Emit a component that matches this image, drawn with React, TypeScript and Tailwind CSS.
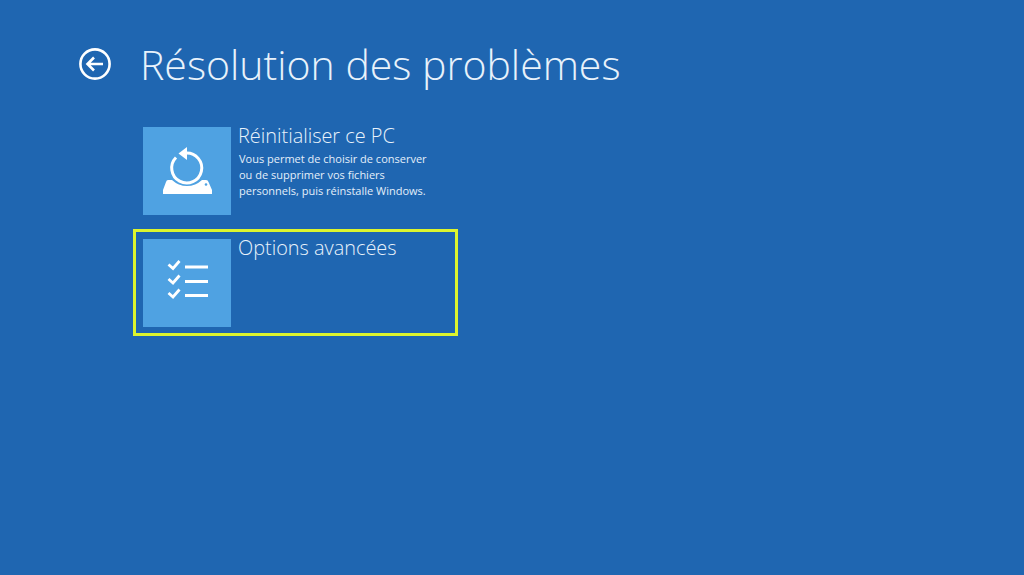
function ResetIcon() {
  return (
    <svg width="52" height="52" viewBox="0 0 52 52" fill="none">
      <path d="M7 35 H11 A22 22 0 0 0 41 35 H45 Q47 35 47.500 37 L51 45 V49 H2 V45 L5 37 Q5.500 35 7 35 Z" fill="#fff" />
      <circle cx="45" cy="39.500" r="1.300" fill="#4fa2e2" />
      <path d="M25 8 A15 15 0 1 1 15 12.500" stroke="#fff" strokeWidth="3" />
      <path d="M26 2 V15 L17.500 8.500 Z" fill="#fff" />
    </svg>
  );
}

function ChecklistIcon() {
  const rows = [0, 14.5, 28.5];
  return (
    <svg width="44" height="46" viewBox="0 0 44 46" fill="none">
      {rows.map((y) => (
        <g key={y} transform={`translate(0 ${y})`}>
          <path d="M3.500 4.500 L8 8.500 L14.500 1" stroke="#fff" strokeWidth="2.800" />
          <rect x="20" y="5.500" width="23" height="3" fill="#fff" />
        </g>
      ))}
    </svg>
  );
}

export default function App() {
  return (
    <div
      className="w-[1024px] h-[575px] overflow-hidden bg-[#1f66b1] text-white pt-[38px]"
      style={{ fontFamily: '"Open Sans", "Noto Sans", sans-serif' }}
    >
      <div className="flex items-center h-[52px] pl-[79px]">
        <svg width="32" height="32" viewBox="0 0 32 32" fill="none">
          <circle cx="16" cy="16" r="14.6" stroke="#fff" strokeWidth="2.6" />
          <path d="M24 16 H9 M15 9.5 L8.5 16 L15 22.5" stroke="#fff" strokeWidth="2.6" />
        </svg>
        <h1 className="ml-[29px] text-[41px] leading-[52px] font-light text-[#e8f2fb]">
          Résolution des problèmes
        </h1>
      </div>

      <div className="flex flex-col mt-[27px] ml-[133px] w-[325px]">
        <div className="flex h-[107px] p-[10px] pr-0">
          <div className="w-[88px] h-[88px] bg-[#4fa2e2] flex items-center justify-center shrink-0">
            <ResetIcon />
          </div>
          <div className="ml-[7px] -mt-[3px]">
            <div className="text-[19.9px] leading-[24px] font-light text-[#e8f2fb]">Réinitialiser ce PC</div>
            <p className="text-[11px] leading-[16px] mt-[3px] ml-[1px] text-[#e4effa]">
              Vous permet de choisir de conserver
              <br />
              ou de supprimer vos fichiers
              <br />
              personnels, puis réinstalle Windows.
            </p>
          </div>
        </div>
        <div className="flex h-[107px] mt-[5px] border-[3px] border-[#dcf52e] p-[7px] pr-0">
          <div className="w-[88px] h-[88px] bg-[#4fa2e2] flex items-center justify-center shrink-0">
            <ChecklistIcon />
          </div>
          <div className="ml-[7px] -mt-[3px]">
            <div className="text-[19.9px] leading-[24px] font-light text-[#e8f2fb]">Options avancées</div>
          </div>
        </div>
      </div>
    </div>
  );
}
